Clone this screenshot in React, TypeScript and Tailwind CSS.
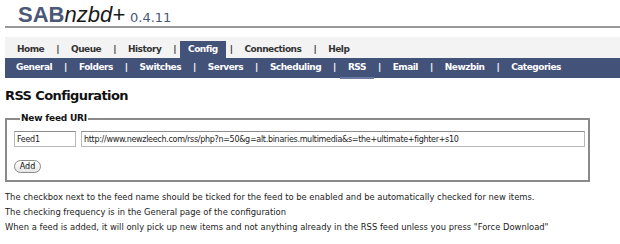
import React from "react";

const top = ["Home", "Queue", "History", "Config", "Connections", "Help"];
const sub = ["General", "Folders", "Switches", "Servers", "Scheduling", "RSS", "Email", "Newzbin", "Categories"];

function Sep({ light }: { light?: boolean }) {
  return <span className={"mx-[4px] h-[17px] flex items-center " + (light ? "text-white" : "text-[#333]")}>|</span>;
}

export default function App() {
  return (
    <div className="w-[620px] h-[244px] overflow-hidden bg-white text-[#222]" style={{ fontFamily: '"DejaVu Sans", Verdana, sans-serif' }}>
      <div className="pt-[4px] pl-[18px] h-[26px] flex items-baseline leading-[22px]">
        <span className="text-[22px] font-bold text-[#4b5878]" style={{ fontFamily: '"Liberation Sans", Arial, sans-serif' }}>SAB</span>
        <span className="text-[22px] italic text-[#1a1a1a]" style={{ fontFamily: '"Liberation Sans", Arial, sans-serif' }}>nzbd+</span>
        <span className="ml-[5px] text-[13px] text-[#4b5878]">0.4.11</span>
      </div>
      <div className="ml-[5px] h-[2px] bg-[#999]" />
      <div className="mt-[9px] ml-[5px] h-[21px] bg-[#f3f3f3] flex items-end pl-[4px] text-[9px] font-bold tracking-[-0.5px] text-[#333]">
        {top.map((t, i) => (
          <React.Fragment key={t}>
            {i > 0 && <Sep />}
            <span className={"h-[17px] px-[8px] flex items-center " + (t === "Config" ? "bg-[#435279] text-white" : "")}>{t}</span>
          </React.Fragment>
        ))}
      </div>
      <div className="ml-[5px] h-[20px] bg-[#435279] flex items-center pl-[3px] text-[9px] font-bold tracking-[-0.5px] text-white">
        {sub.map((t, i) => (
          <React.Fragment key={t}>
            {i > 0 && <Sep light />}
            <span className="relative px-[8px] h-[20px] flex items-center">
              {t}
              {t === "RSS" && <span className="absolute left-0 right-0 -bottom-[1px] h-[2px] bg-[#6a7aa0]" />}
            </span>
          </React.Fragment>
        ))}
      </div>
      <h1 className="mt-[10px] ml-[5px] text-[13px] leading-[15px] font-bold tracking-[-0.6px] text-[#111]">RSS Configuration</h1>
      <fieldset className="mt-[10px] ml-[5px] w-[585px] border-2 border-[#8a8a8a] pl-[7px] pr-[3px] pt-[7px] pb-[4px]">
        <legend className="ml-[6px] px-[1px] text-[9px] leading-[11px] font-bold tracking-[-0.2px] text-[#111]">New feed URI</legend>
        <div className="flex gap-[5px]">
          <input readOnly value="Feed1" className="w-[62px] h-[16px] border border-[#b8b8b8] border-t-[#8e8e8e] px-[2px] text-[8px] tracking-[-0.3px] text-[#222] outline-none" />
          <input readOnly value="http://www.newzleech.com/rss/php?n=50&g=alt.binaries.multimedia&s=the+ultimate+fighter+s10" className="w-[504px] h-[16px] border border-[#b8b8b8] border-t-[#8e8e8e] px-[2px] text-[8px] tracking-[-0.3px] text-[#222] outline-none" />
        </div>
        <button className="mt-[13px] h-[13px] w-[27px] rounded-full border border-[#8a8a8a] bg-gradient-to-b from-white to-[#e6e6e6] text-[8px] leading-[11px] text-[#111]">Add</button>
      </fieldset>
      <div className="mt-[8px] ml-[5px] text-[8.4px] leading-[15px] text-[#222]">
        <p>The checkbox next to the feed name should be ticked for the feed to be enabled and be automatically checked for new items.</p>
        <p>The checking frequency is in the General page of the configuration</p>
        <p>When a feed is added, it will only pick up new items and not anything already in the RSS feed unless you press "Force Download"</p>
      </div>
    </div>
  );
}
